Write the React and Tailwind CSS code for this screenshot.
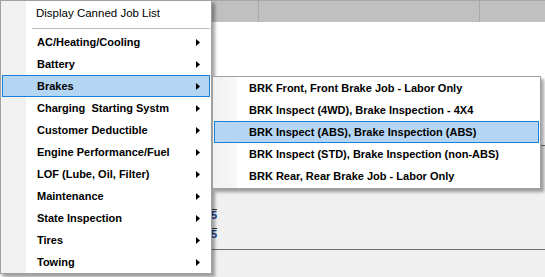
import React from 'react';

const mainItems = [
  'AC/Heating/Cooling',
  'Battery',
  'Brakes',
  'Charging  Starting Systm',
  'Customer Deductible',
  'Engine Performance/Fuel',
  'LOF (Lube, Oil, Filter)',
  'Maintenance',
  'State Inspection',
  'Tires',
  'Towing',
];

const brakeJobs = [
  'BRK Front, Front Brake Job - Labor Only',
  'BRK Inspect (4WD), Brake Inspection - 4X4',
  'BRK Inspect (ABS), Brake Inspection (ABS)',
  'BRK Inspect (STD), Brake Inspection (non-ABS)',
  'BRK Rear, Rear Brake Job - Labor Only',
];

// small black sub-menu arrow
function Arrow() {
  return (
    <svg width="4" height="7" viewBox="0 0 4 7" className="shrink-0">
      <path d="M0 0 L4 3.5 L0 7 Z" fill="#000" />
    </svg>
  );
}

export default function App() {
  return (
    <div
      className="relative w-[545px] h-[277px] overflow-hidden bg-[#f0f0f0]"
      style={{ fontFamily: '"Liberation Sans", Arial, sans-serif' }}
    >
      {/* background window */}
      <div className="flex h-[22px] bg-[#c0c0c0] border-t border-[#a8a8a8]">
        <div className="w-[259px] border-r border-[#a9a9a9]" />
        <div className="w-[221px] border-r border-[#a9a9a9]" />
        <div className="flex-1" />
      </div>
      <div className="h-[124px] bg-white border-b border-[#6d6d6d]" />
      <div className="flex flex-col h-[104px] border-b border-[#6d6d6d]">
        <div className="flex flex-col items-end w-[217px] mt-[63px] gap-[8px]">
          <span className="text-[11px] leading-[10px] font-bold text-[#1a3c8c] border-t border-[#333]">5</span>
          <span className="text-[11px] leading-[10px] font-bold text-[#1a3c8c] border-t border-[#333]">5</span>
        </div>
      </div>

      {/* main context menu */}
      <div className="absolute left-0 top-0 w-[212px] h-[274px] bg-white border border-[#a0a0a0] shadow-[3px_3px_3px_rgba(0,0,0,0.35)] text-[11px] text-black">
        <div className="absolute left-0 top-0 bottom-0 w-[25px] bg-[#f1f1f1]" />
        <div className="relative pt-[1px]">
          <div className="flex items-center h-[24px] pl-[35px] text-[11.5px]">Display Canned Job List</div>
          <div className="h-px my-[2px] ml-[31px] mr-[1px] bg-[#bdbdbd]" />
          {mainItems.map((label, i) => (
            <div
              key={label}
              className={
                'flex items-center h-[22px] mx-px pl-[34px] pr-[9px] font-bold whitespace-pre ' +
                (i === 2 ? 'bg-[#b5d6f3] border border-[#1c7fd6]' : 'border border-transparent')
              }
            >
              <span className="flex-1">{label}</span>
              <Arrow />
            </div>
          ))}
        </div>
      </div>

      {/* brakes submenu */}
      <div className="absolute left-[212px] top-[76px] w-[329px] h-[113px] bg-white border border-[#a0a0a0] shadow-[3px_3px_3px_rgba(0,0,0,0.35)] text-[11px] text-black font-bold">
        <div className="absolute left-0 top-0 bottom-0 w-[24px] bg-gradient-to-r from-[#f1f1f1] to-[#f7f7f7]" />
        <div className="relative">
          {brakeJobs.map((label, i) => (
            <div
              key={label}
              className={
                'flex items-center h-[22px] mx-px pl-[34px] ' +
                (i === 2 ? 'bg-[#b5d6f3] border border-[#1c7fd6]' : 'border border-transparent')
              }
            >
              {label}
            </div>
          ))}
        </div>
      </div>
    </div>
  );
}
